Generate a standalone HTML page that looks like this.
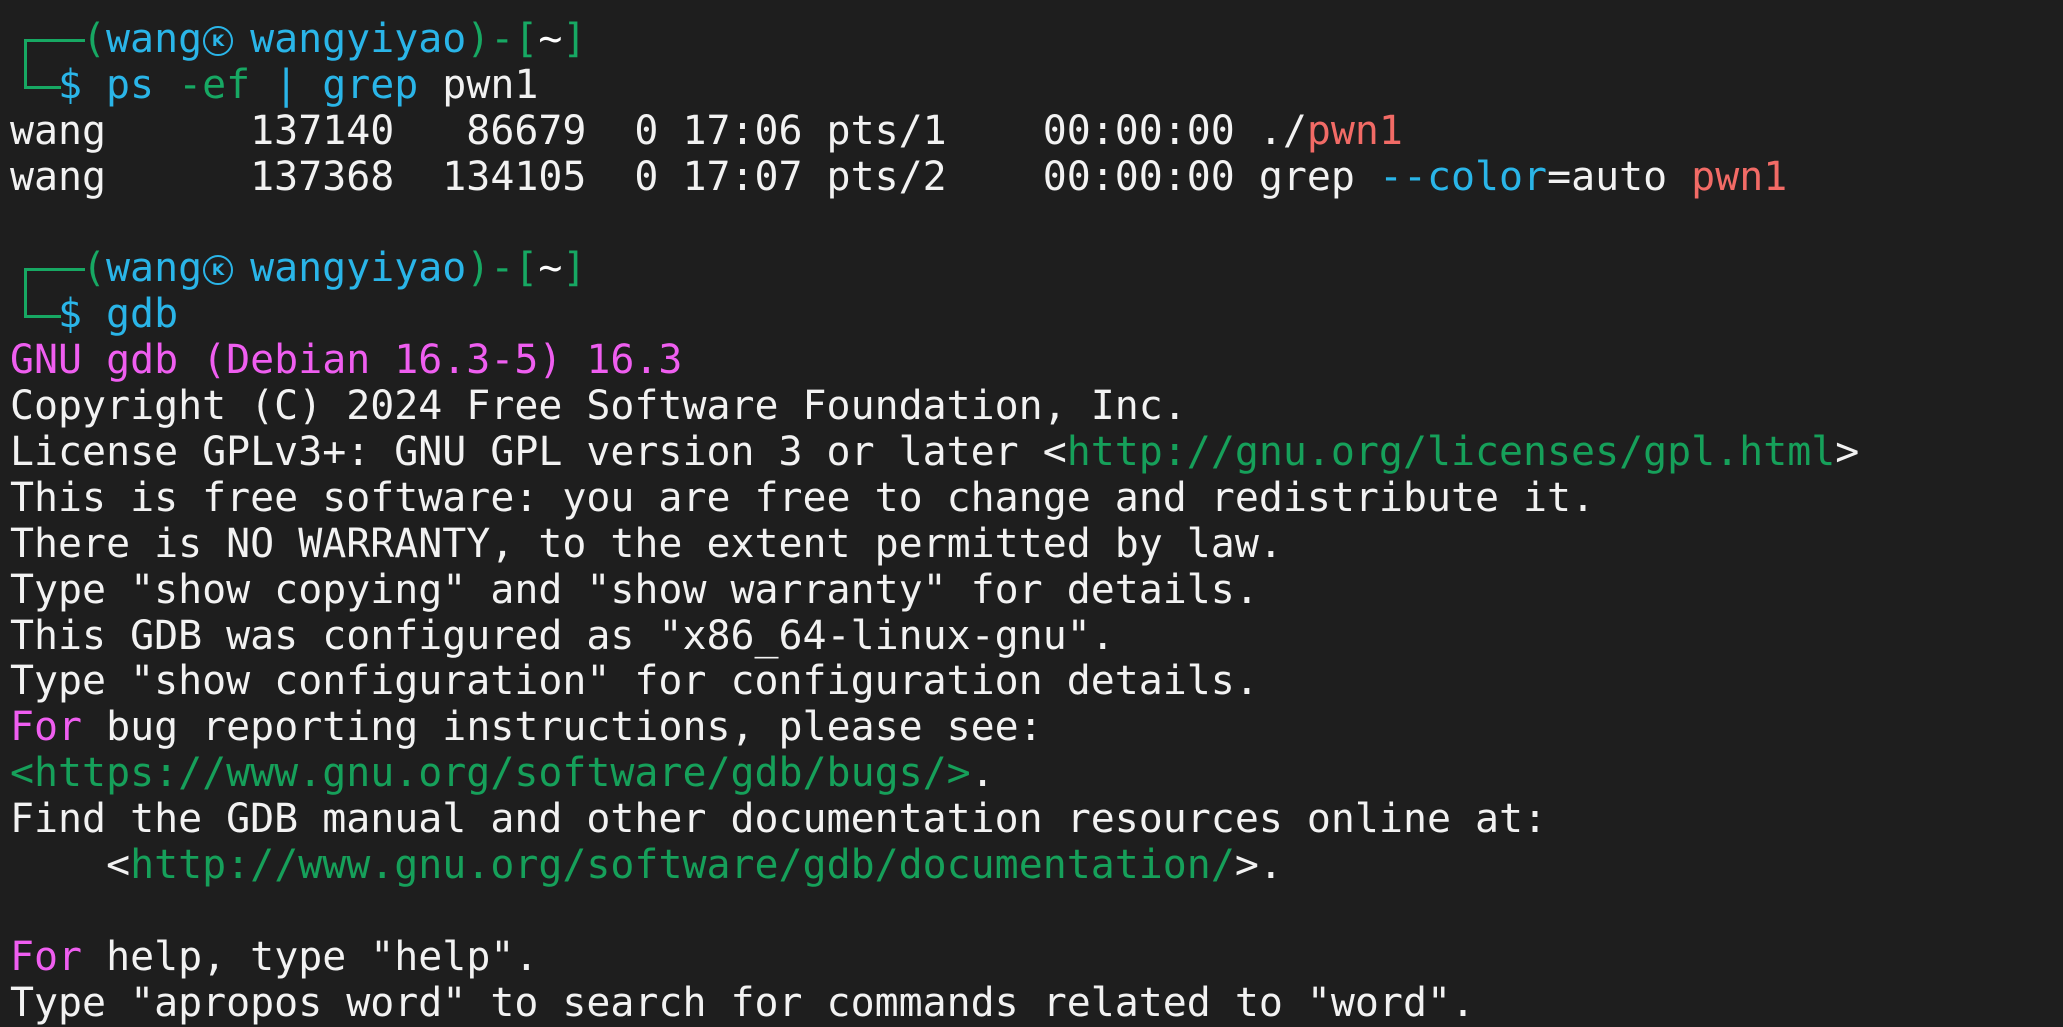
<!DOCTYPE html>
<html><head><meta charset="utf-8"><style>
html,body{margin:0;padding:0;background:#1e1e1e;width:2063px;height:1026px;overflow:hidden}
#t{position:absolute;left:10px;top:17px;font-family:"DejaVu Sans Mono","Liberation Mono",monospace;font-size:39.9px;color:#f2f2f2}
.l{height:45.9px;line-height:45.9px;white-space:pre}
.g{color:#17a863}.b{color:#2ab5e8}.w{color:#fff}.r{color:#f26b66}.m{color:#ef5ef0}.u{color:#16a05a}
.k{display:inline-block;width:48px;height:45.9px;vertical-align:top;position:relative}
.k span{position:absolute;left:1px;top:9px;width:26px;height:26px;border:2.5px solid #2ab5e8;border-radius:50%;font-size:16px;line-height:26px;text-align:center;color:#2ab5e8;font-family:"DejaVu Sans",sans-serif;font-weight:bold}
.c1{display:inline-block;width:72px;height:45.9px;vertical-align:top;position:relative}
.c1:before{content:"";position:absolute;left:14px;top:22px;width:58px;height:24px;border-left:3px solid #17a863;border-top:3px solid #17a863}
.c2{display:inline-block;width:48px;height:45.9px;vertical-align:top;position:relative}
.c2:before{content:"";position:absolute;left:14px;top:0;width:34px;height:23px;border-left:3px solid #17a863;border-bottom:3px solid #17a863}
</style></head><body><div id="t"><div class="l"><span class="c1"></span><span class="g">(</span><span class="b">wang<span class="k"><span>K</span></span>wangyiyao</span><span class="g">)-[</span><span class="w">~</span><span class="g">]</span></div><div class="l"><span class="c2"></span><span class="b">$ ps </span><span class="g">-ef</span><span class="b"> | grep </span>pwn1</div><div class="l">wang      137140   86679  0 17:06 pts/1    00:00:00 ./<span class="r">pwn1</span></div><div class="l">wang      137368  134105  0 17:07 pts/2    00:00:00 grep <span class="b">--color</span>=auto <span class="r">pwn1</span></div><div class="l"> </div><div class="l"><span class="c1"></span><span class="g">(</span><span class="b">wang<span class="k"><span>K</span></span>wangyiyao</span><span class="g">)-[</span><span class="w">~</span><span class="g">]</span></div><div class="l"><span class="c2"></span><span class="b">$ gdb</span></div><div class="l m">GNU gdb (Debian 16.3-5) 16.3</div><div class="l">Copyright (C) 2024 Free Software Foundation, Inc.</div><div class="l">License GPLv3+: GNU GPL version 3 or later &lt;<span class="u">http://gnu.org/licenses/gpl.html</span>&gt;</div><div class="l">This is free software: you are free to change and redistribute it.</div><div class="l">There is NO WARRANTY, to the extent permitted by law.</div><div class="l">Type "show copying" and "show warranty" for details.</div><div class="l">This GDB was configured as "x86_64-linux-gnu".</div><div class="l">Type "show configuration" for configuration details.</div><div class="l"><span class="m">For</span> bug reporting instructions, please see:</div><div class="l"><span class="u">&lt;https://www.gnu.org/software/gdb/bugs/&gt;</span>.</div><div class="l">Find the GDB manual and other documentation resources online at:</div><div class="l">    &lt;<span class="u">http://www.gnu.org/software/gdb/documentation/</span>&gt;.</div><div class="l"> </div><div class="l"><span class="m">For</span> help, type "help".</div><div class="l">Type "apropos word" to search for commands related to "word".</div></div></body></html>
